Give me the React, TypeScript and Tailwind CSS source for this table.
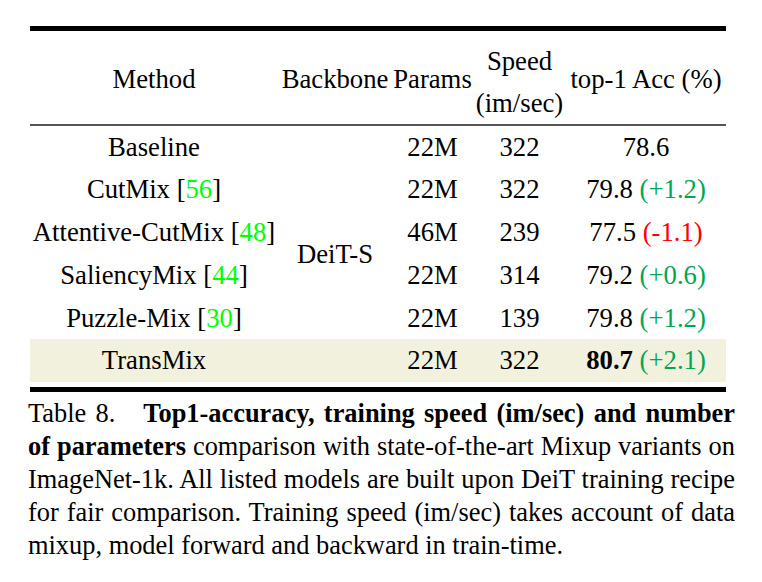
const rowStarts = ['row-start-1', 'row-start-2', 'row-start-3', 'row-start-4', 'row-start-5', 'row-start-6'];

interface Row {
  method: string;
  cite?: string;
  params: string;
  speed: string;
  acc: string;
  delta?: string;
  positive?: boolean;
  best?: boolean;
}

const rows: Row[] = [
  { method: 'Baseline', params: '22M', speed: '322', acc: '78.6' },
  { method: 'CutMix', cite: '56', params: '22M', speed: '322', acc: '79.8', delta: '(+1.2)', positive: true },
  { method: 'Attentive-CutMix', cite: '48', params: '46M', speed: '239', acc: '77.5', delta: '(-1.1)', positive: false },
  { method: 'SaliencyMix', cite: '44', params: '22M', speed: '314', acc: '79.2', delta: '(+0.6)', positive: true },
  { method: 'Puzzle-Mix', cite: '30', params: '22M', speed: '139', acc: '79.8', delta: '(+1.2)', positive: true },
  { method: 'TransMix', params: '22M', speed: '322', acc: '80.7', delta: '(+2.1)', positive: true, best: true },
];

const cols = 'grid grid-cols-[248px_114px_81px_93px_160px]';

export default function App() {
  return (
    <div
      className="w-[762px] h-[582px] bg-white text-black overflow-hidden"
      style={{ fontFamily: '"Liberation Serif", "Times New Roman", serif' }}
    >
      <div className="ml-[30px] pt-[26px] w-[696px] text-[26.7px]">
        <div className="h-[5px] bg-black" />

        {/* header */}
        <div className={`${cols} h-[93px] items-start text-center leading-[42px]`}>
          <div className="pt-[27px]">Method</div>
          <div className="pt-[27px]">Backbone</div>
          <div className="pt-[27px]">Params</div>
          <div className="pt-[9px]">
            <div>Speed</div>
            <div>(im/sec)</div>
          </div>
          <div className="pt-[27px] whitespace-nowrap">top-1 Acc (%)</div>
        </div>
        <div className="h-[2px] bg-[#555]" />

        {/* body */}
        <div className={`${cols} grid-rows-[42px_43px_43px_43px_42px_43px] text-center leading-[43px]`}>
          <div className="row-start-6 col-start-1 col-span-5 bg-[#f2f1de]" />
          {rows.map((r, i) => (
            <div key={r.method} className="contents">
              <div className={`${rowStarts[i]} col-start-1 self-center whitespace-nowrap`}>
                {r.method}
                {r.cite && (
                  <>
                    {' ['}
                    <span className="text-[#00ff00]">{r.cite}</span>]
                  </>
                )}
              </div>
              <div className={`${rowStarts[i]} col-start-3 self-center`}>{r.params}</div>
              <div className={`${rowStarts[i]} col-start-4 self-center`}>{r.speed}</div>
              <div className={`${rowStarts[i]} col-start-5 self-center whitespace-nowrap`}>
                <span className={r.best ? 'font-bold' : ''}>{r.acc}</span>
                {r.delta && (
                  <span className={r.positive ? 'text-[#00a651]' : 'text-[#ff0000]'}> {r.delta}</span>
                )}
              </div>
            </div>
          ))}
          <div className="row-start-1 row-span-6 col-start-2 self-center pt-[1px]">DeiT-S</div>
        </div>

        <div className="h-[5px]" />
        <div className="h-[5px] bg-black" />
      </div>

      {/* caption */}
      <p className="ml-[28px] mt-[5px] w-[707px] text-[26.4px] leading-[33px] text-justify">
        Table 8.&nbsp;&nbsp; <b>Top1-accuracy, training speed (im/sec) and number of parameters</b>{' '}
        comparison with state-of-the-art Mixup variants on ImageNet-1k. All listed models are built
        upon DeiT training recipe for fair comparison. Training speed (im/sec) takes account of data
        mixup, model forward and backward in train-time.
      </p>
    </div>
  );
}
